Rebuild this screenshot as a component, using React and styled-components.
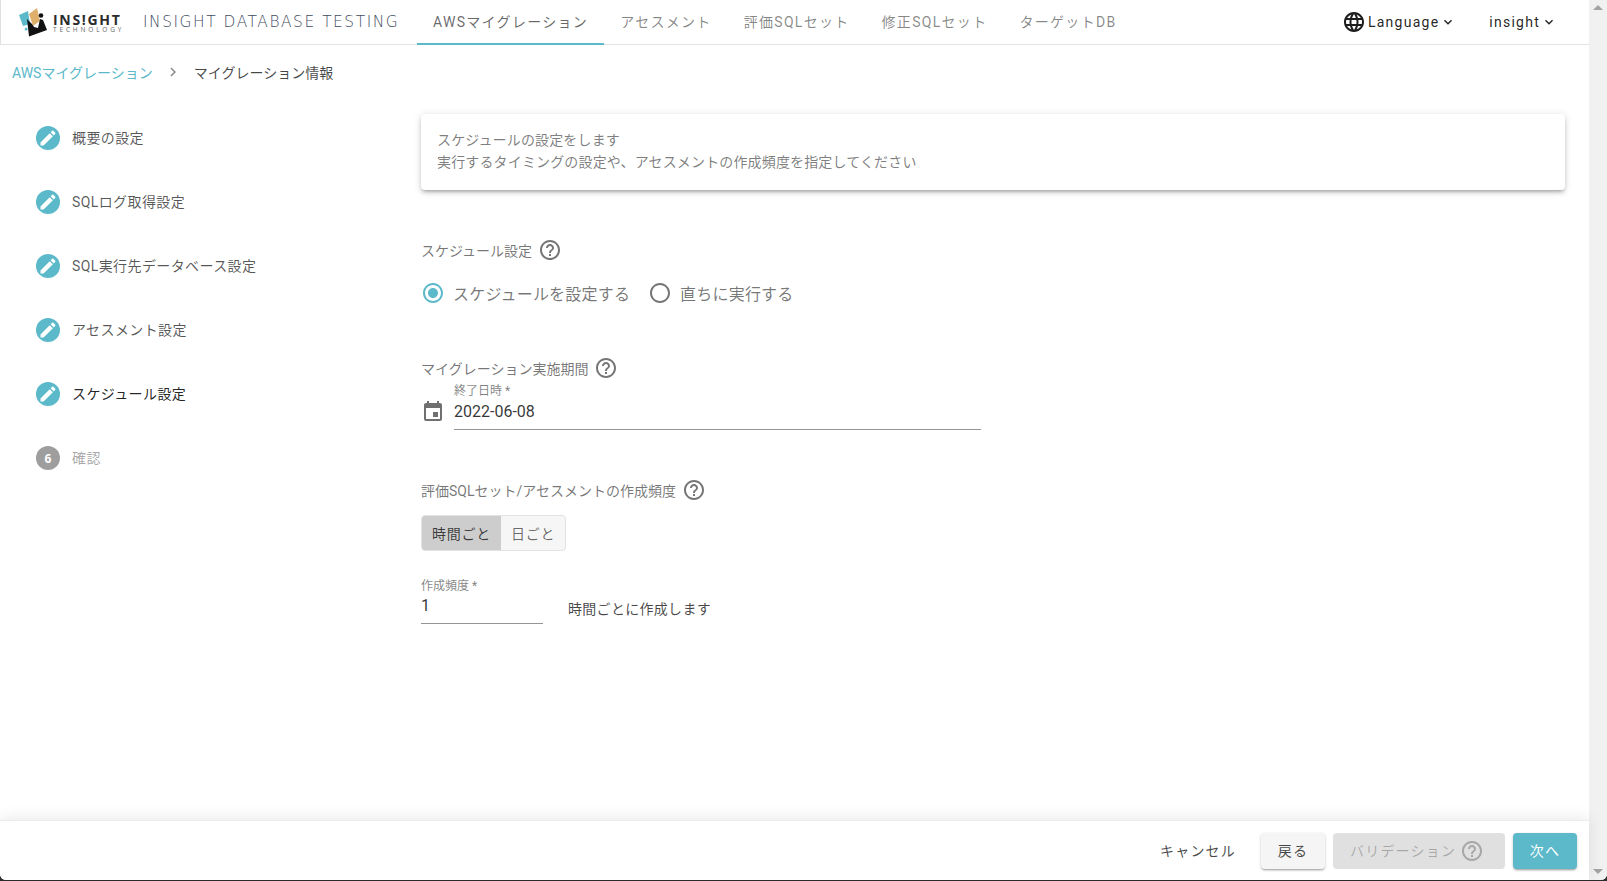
import React from "react";
import styled, { createGlobalStyle } from "styled-components";
import {
  MdEdit,
  MdLanguage,
  MdKeyboardArrowDown,
  MdChevronRight,
  MdHelpOutline,
  MdEvent,
  MdRadioButtonChecked,
  MdRadioButtonUnchecked,
} from "react-icons/md";

const TEAL = "#5bb9c9";
const FONT = `Roboto, "Noto Sans CJK JP", sans-serif`;

const Global = createGlobalStyle`
  html, body { margin: 0; padding: 0; height: 100%; overflow: hidden; }
  body { font-family: ${FONT}; background: #fff; }
  #root { height: 100%; }
  * { box-sizing: border-box; }
`;

const Screen = styled.div`
  height: 100vh;
  background: #2c2c2c;
  padding-bottom: 1px;
`;
const Frame = styled.div`
  height: 100%;
  display: flex;
  background: #fff;
  border-radius: 0 0 6px 6px;
  overflow: hidden;
`;
const Window = styled.div`
  flex: 1;
  min-width: 0;
  display: flex;
  flex-direction: column;
`;

/* scrollbar */
const ScrollTrack = styled.div`
  width: 18px;
  flex: none;
  background: #f1f1f1;
  display: flex;
  flex-direction: column;
  align-items: center;
  justify-content: space-between;
  padding: 5px 0 6px;
`;
const ScrollArrow = styled.div`
  width: 0;
  height: 0;
  border-left: 5px solid transparent;
  border-right: 5px solid transparent;
  ${(p) =>
    p.$down
      ? "border-top: 5px solid #a3a3a3;"
      : "border-bottom: 5px solid #a3a3a3;"}
`;

/* header */
const Header = styled.header`
  height: 45px;
  flex: none;
  display: flex;
  align-items: stretch;
  border-left: 1px solid #e0e0e0;
  border-bottom: 1px solid #e2e2e2;
  padding-right: 32px;
`;
const Logo = styled.div`
  display: flex;
  align-items: center;
  margin-left: 18px;
  width: 124px;
  flex: none;
`;
const LogoWords = styled.div`
  display: flex;
  flex-direction: column;
  margin-left: 4px;
  margin-top: 3px;
`;
const LogoName = styled.span`
  font-family: "Open Sans", sans-serif;
  font-weight: 700;
  font-size: 14px;
  line-height: 13px;
  letter-spacing: 1.7px;
  color: #2b2b2b;
  white-space: nowrap;
`;
const LogoSub = styled.span`
  font-family: "Open Sans", sans-serif;
  font-size: 6.5px;
  line-height: 8px;
  letter-spacing: 2.85px;
  color: #666;
  white-space: nowrap;
`;
const AppTitle = styled.div`
  width: 274px;
  flex: none;
  display: flex;
  align-items: center;
  padding-bottom: 1px;
  font-family: "DejaVu Sans", sans-serif;
  font-weight: 200;
  font-size: 15.4px;
  letter-spacing: 1.55px;
  color: #3f4c5e;
  white-space: nowrap;
`;
const Tabs = styled.nav`
  display: flex;
  align-items: stretch;
`;
const Tab = styled.div`
  display: flex;
  align-items: center;
  padding: 0 16px 2px;
  font-size: 14px;
  letter-spacing: 1.3px;
  color: rgba(0, 0, 0, ${(p) => (p.$active ? 0.6 : 0.48)});
  white-space: nowrap;
  margin-bottom: -1px;
  border-bottom: 2px solid ${(p) => (p.$active ? TEAL : "transparent")};
`;
const HeaderRight = styled.div`
  margin-left: auto;
  display: flex;
  align-items: center;
  padding-bottom: 1px;
`;
const HeaderMenu = styled.div`
  display: flex;
  align-items: center;
  font-size: 14px;
  letter-spacing: 1.25px;
  color: rgba(0, 0, 0, 0.87);
  margin-left: ${(p) => p.$gap || 0}px;
  svg { flex: none; }
`;
const GlobeIcon = styled(MdLanguage)`
  font-size: 24px;
  margin-right: 2px;
  color: #1d1d1d;
`;
const MenuChevron = styled(MdKeyboardArrowDown)`
  font-size: 16px;
  margin-left: 1px;
`;

/* breadcrumb */
const Crumbs = styled.div`
  height: 56px;
  flex: none;
  display: flex;
  align-items: center;
  padding: 0 0 3px 12px;
  font-size: 14px;
`;
const CrumbLink = styled.span`
  color: ${TEAL};
`;
const CrumbSep = styled(MdChevronRight)`
  font-size: 18px;
  margin: 1px 12px 0 11px;
  color: #8a8a8a;
`;
const CrumbHere = styled.span`
  color: rgba(0, 0, 0, 0.72);
`;

/* body */
const Body = styled.div`
  flex: 1;
  min-height: 0;
  display: flex;
`;
const Stepper = styled.aside`
  width: 421px;
  flex: none;
  padding: 5px 0 0 36px;
`;
const Step = styled.div`
  height: 64px;
  display: flex;
  align-items: center;
  font-size: 14px;
  color: ${(p) =>
    p.$state === "active"
      ? "rgba(0,0,0,0.87)"
      : p.$state === "off"
      ? "rgba(0,0,0,0.36)"
      : "rgba(0,0,0,0.66)"};
`;
const StepDot = styled.span`
  width: 24px;
  height: 24px;
  flex: none;
  border-radius: 50%;
  margin-right: 12px;
  background: ${(p) => (p.$off ? "#9e9e9e" : TEAL)};
  color: #fff;
  display: flex;
  align-items: center;
  justify-content: center;
  font-size: 12px;
  font-weight: 700;
  font-family: "Open Sans", sans-serif;
`;
const StepEdit = styled(MdEdit)`
  font-size: 20px;
`;
const StepLabel = styled.span`
  letter-spacing: 0.4px;
  margin-bottom: 2px;
`;

const Form = styled.main`
  flex: 1;
  min-width: 0;
  padding: 13px 24px 0 0;
`;
const InfoCard = styled.div`
  height: 76px;
  padding: 15px 16px;
  border-radius: 4px;
  background: #fff;
  font-size: 14px;
  line-height: 22px;
  letter-spacing: 0.15px;
  color: rgba(0, 0, 0, 0.52);
  box-shadow: 0 3px 3px -2px rgba(0, 0, 0, 0.2), 0 3px 4px 0 rgba(0, 0, 0, 0.14),
    0 1px 8px 0 rgba(0, 0, 0, 0.12);
`;
const SectionTitle = styled.div`
  height: 24px;
  display: flex;
  align-items: center;
  font-size: 14px;
  color: rgba(0, 0, 0, 0.55);
  margin-top: ${(p) => p.$top}px;
`;
const HelpIcon = styled(MdHelpOutline)`
  font-size: 24px;
  margin-left: 6px;
  color: #757575;
`;
const RadioRow = styled.div`
  height: 42px;
  margin-top: 10px;
  display: flex;
  align-items: center;
`;
const RadioOption = styled.label`
  display: flex;
  align-items: center;
  margin-right: 18px;
  font-size: 16px;
  letter-spacing: 0.2px;
  color: rgba(0, 0, 0, 0.54);
  svg { font-size: 24px; flex: none; margin-right: 8px; color: ${(p) => (p.$on ? TEAL : "#757575")}; }
`;
const DateField = styled.div`
  display: flex;
  align-items: flex-end;
  margin-top: 4px;
`;
const DateIcon = styled(MdEvent)`
  font-size: 24px;
  flex: none;
  margin: 0 9px 6px 0;
  color: #707070;
`;
const FieldStack = styled.div`
  width: ${(p) => p.$width}px;
  flex: none;
`;
const FieldLabel = styled.div`
  font-size: 12px;
  line-height: 14px;
  color: rgba(0, 0, 0, 0.5);
`;
const FieldValue = styled.div`
  height: ${(p) => p.$h}px;
  padding-top: ${(p) => p.$h - 28}px;
  font-size: 16px;
  line-height: 20px;
  color: rgba(0, 0, 0, 0.8);
  border-bottom: 1px solid rgba(0, 0, 0, 0.42);
`;
const Toggle = styled.div`
  display: inline-flex;
  margin-top: 13px;
  height: 36px;
  border: 1px solid #e2e2e2;
  border-radius: 4px;
  overflow: hidden;
  background: #f6f6f6;
  vertical-align: top;
`;
const ToggleBtn = styled.div`
  display: flex;
  align-items: center;
  padding: 0 10px 1px;
  font-size: 14px;
  letter-spacing: 0.75px;
  color: rgba(0, 0, 0, ${(p) => (p.$on ? 0.72 : 0.58)});
  background: ${(p) => (p.$on ? "#cdcdcd" : "transparent")};
`;
const FrequencyRow = styled.div`
  display: flex;
  align-items: flex-end;
  margin-top: 28px;
`;
const FrequencySuffix = styled.div`
  margin: 0 0 5px 25px;
  font-size: 14px;
  line-height: 20px;
  letter-spacing: 0.3px;
  color: rgba(0, 0, 0, 0.72);
`;

/* footer */
const Footer = styled.footer`
  position: relative;
  height: 60px;
  flex: none;
  display: flex;
  align-items: center;
  justify-content: flex-end;
  gap: 8px;
  padding-right: 12px;
  background: #fff;
  box-shadow: 0 -2px 14px rgba(0, 0, 0, 0.09);
  border-top: 1px solid #ececec;
`;
const Btn = styled.div`
  height: 36px;
  display: flex;
  align-items: center;
  justify-content: center;
  min-width: 64px;
  border-radius: 4px;
  font-size: 14px;
  letter-spacing: 1.2px;
  padding: 0 16px 2px;
  white-space: nowrap;
`;
const TextBtn = styled(Btn)`
  color: rgba(0, 0, 0, 0.72);
  margin-right: 1px;
`;
const RaisedBtn = styled(Btn)`
  color: rgba(0, 0, 0, 0.72);
  background: #f5f5f5;
  box-shadow: 0 2px 2px -1px rgba(0, 0, 0, 0.25), 0 1px 3px rgba(0, 0, 0, 0.2);
`;
const DisabledBtn = styled(Btn)`
  width: 172px;
  justify-content: flex-start;
  padding: 0 0 2px 17px;
  color: rgba(0, 0, 0, 0.26);
  background: #e0e0e0;
  svg { font-size: 24px; margin: 2px 0 0 4px; color: rgba(0, 0, 0, 0.26); }
`;
const PrimaryBtn = styled(Btn)`
  color: #fff;
  background: ${TEAL};
  box-shadow: 0 2px 2px -1px rgba(0, 0, 0, 0.25), 0 1px 3px rgba(0, 0, 0, 0.2);
`;

const InsightMark = () => (
  <svg width="30" height="30" viewBox="19 6 30 30" style={{ flex: "none" }}>
    <polygon points="19,14 28,10 30,23 23,25" fill="#5bb9c9" />
    <rect x="24.8" y="26.8" width="2.6" height="2.6" fill="#5bb9c9" />
    <polygon points="29,13 37,7 40,20 33,25" fill="#dfb06c" />
    <polygon points="27,18 29,35.5 47,29 43,19 40,18 38,27 34,26 32,23" fill="#111" />
    <circle cx="41" cy="14.5" r="2.3" fill="#111" />
  </svg>
);

const steps = [
  ["概要の設定", "done"],
  ["SQLログ取得設定", "done"],
  ["SQL実行先データベース設定", "done"],
  ["アセスメント設定", "done"],
  ["スケジュール設定", "active"],
];

const tabs = ["AWSマイグレーション", "アセスメント", "評価SQLセット", "修正SQLセット", "ターゲットDB"];

export default function App() {
  return (
    <>
      <Global />
      <Screen>
        <Frame>
          <Window>
            <Header>
              <Logo>
                <InsightMark />
                <LogoWords>
                  <LogoName>INS!GHT</LogoName>
                  <LogoSub>TECHNOLOGY</LogoSub>
                </LogoWords>
              </Logo>
              <AppTitle>INSIGHT DATABASE TESTING</AppTitle>
              <Tabs>
                {tabs.map((t, i) => (
                  <Tab key={t} $active={i === 0}>{t}</Tab>
                ))}
              </Tabs>
              <HeaderRight>
                <HeaderMenu>
                  <GlobeIcon />
                  Language
                  <MenuChevron />
                </HeaderMenu>
                <HeaderMenu $gap={33}>
                  insight
                  <MenuChevron />
                </HeaderMenu>
              </HeaderRight>
            </Header>
            <Crumbs>
              <CrumbLink>AWSマイグレーション</CrumbLink>
              <CrumbSep />
              <CrumbHere>マイグレーション情報</CrumbHere>
            </Crumbs>
            <Body>
              <Stepper>
                {steps.map(([label, state]) => (
                  <Step key={label} $state={state}>
                    <StepDot><StepEdit /></StepDot>
                    <StepLabel>{label}</StepLabel>
                  </Step>
                ))}
                <Step $state="off">
                  <StepDot $off>6</StepDot>
                  <StepLabel>確認</StepLabel>
                </Step>
              </Stepper>
              <Form>
                <InfoCard>
                  スケジュールの設定をします
                  <br />
                  実行するタイミングの設定や、アセスメントの作成頻度を指定してください
                </InfoCard>
                <SectionTitle $top={48}>
                  スケジュール設定
                  <HelpIcon />
                </SectionTitle>
                <RadioRow>
                  <RadioOption $on>
                    <MdRadioButtonChecked />
                    スケジュールを設定する
                  </RadioOption>
                  <RadioOption>
                    <MdRadioButtonUnchecked />
                    直ちに実行する
                  </RadioOption>
                </RadioRow>
                <SectionTitle $top={42}>
                  マイグレーション実施期間
                  <HelpIcon />
                </SectionTitle>
                <DateField>
                  <DateIcon />
                  <FieldStack $width={527}>
                    <FieldLabel>終了日時 *</FieldLabel>
                    <FieldValue $h={32}>2022-06-08</FieldValue>
                  </FieldStack>
                </DateField>
                <SectionTitle $top={48}>
                  評価SQLセット/アセスメントの作成頻度
                  <HelpIcon />
                </SectionTitle>
                <Toggle>
                  <ToggleBtn $on>時間ごと</ToggleBtn>
                  <ToggleBtn>日ごと</ToggleBtn>
                </Toggle>
                <FrequencyRow>
                  <FieldStack $width={122}>
                    <FieldLabel>作成頻度 *</FieldLabel>
                    <FieldValue $h={31}>1</FieldValue>
                  </FieldStack>
                  <FrequencySuffix>時間ごとに作成します</FrequencySuffix>
                </FrequencyRow>
              </Form>
            </Body>
            <Footer>
              <TextBtn>キャンセル</TextBtn>
              <RaisedBtn>戻る</RaisedBtn>
              <DisabledBtn>
                バリデーション
                <MdHelpOutline />
              </DisabledBtn>
              <PrimaryBtn>次へ</PrimaryBtn>
            </Footer>
          </Window>
          <ScrollTrack>
            <ScrollArrow />
            <ScrollArrow $down />
          </ScrollTrack>
        </Frame>
      </Screen>
    </>
  );
}
